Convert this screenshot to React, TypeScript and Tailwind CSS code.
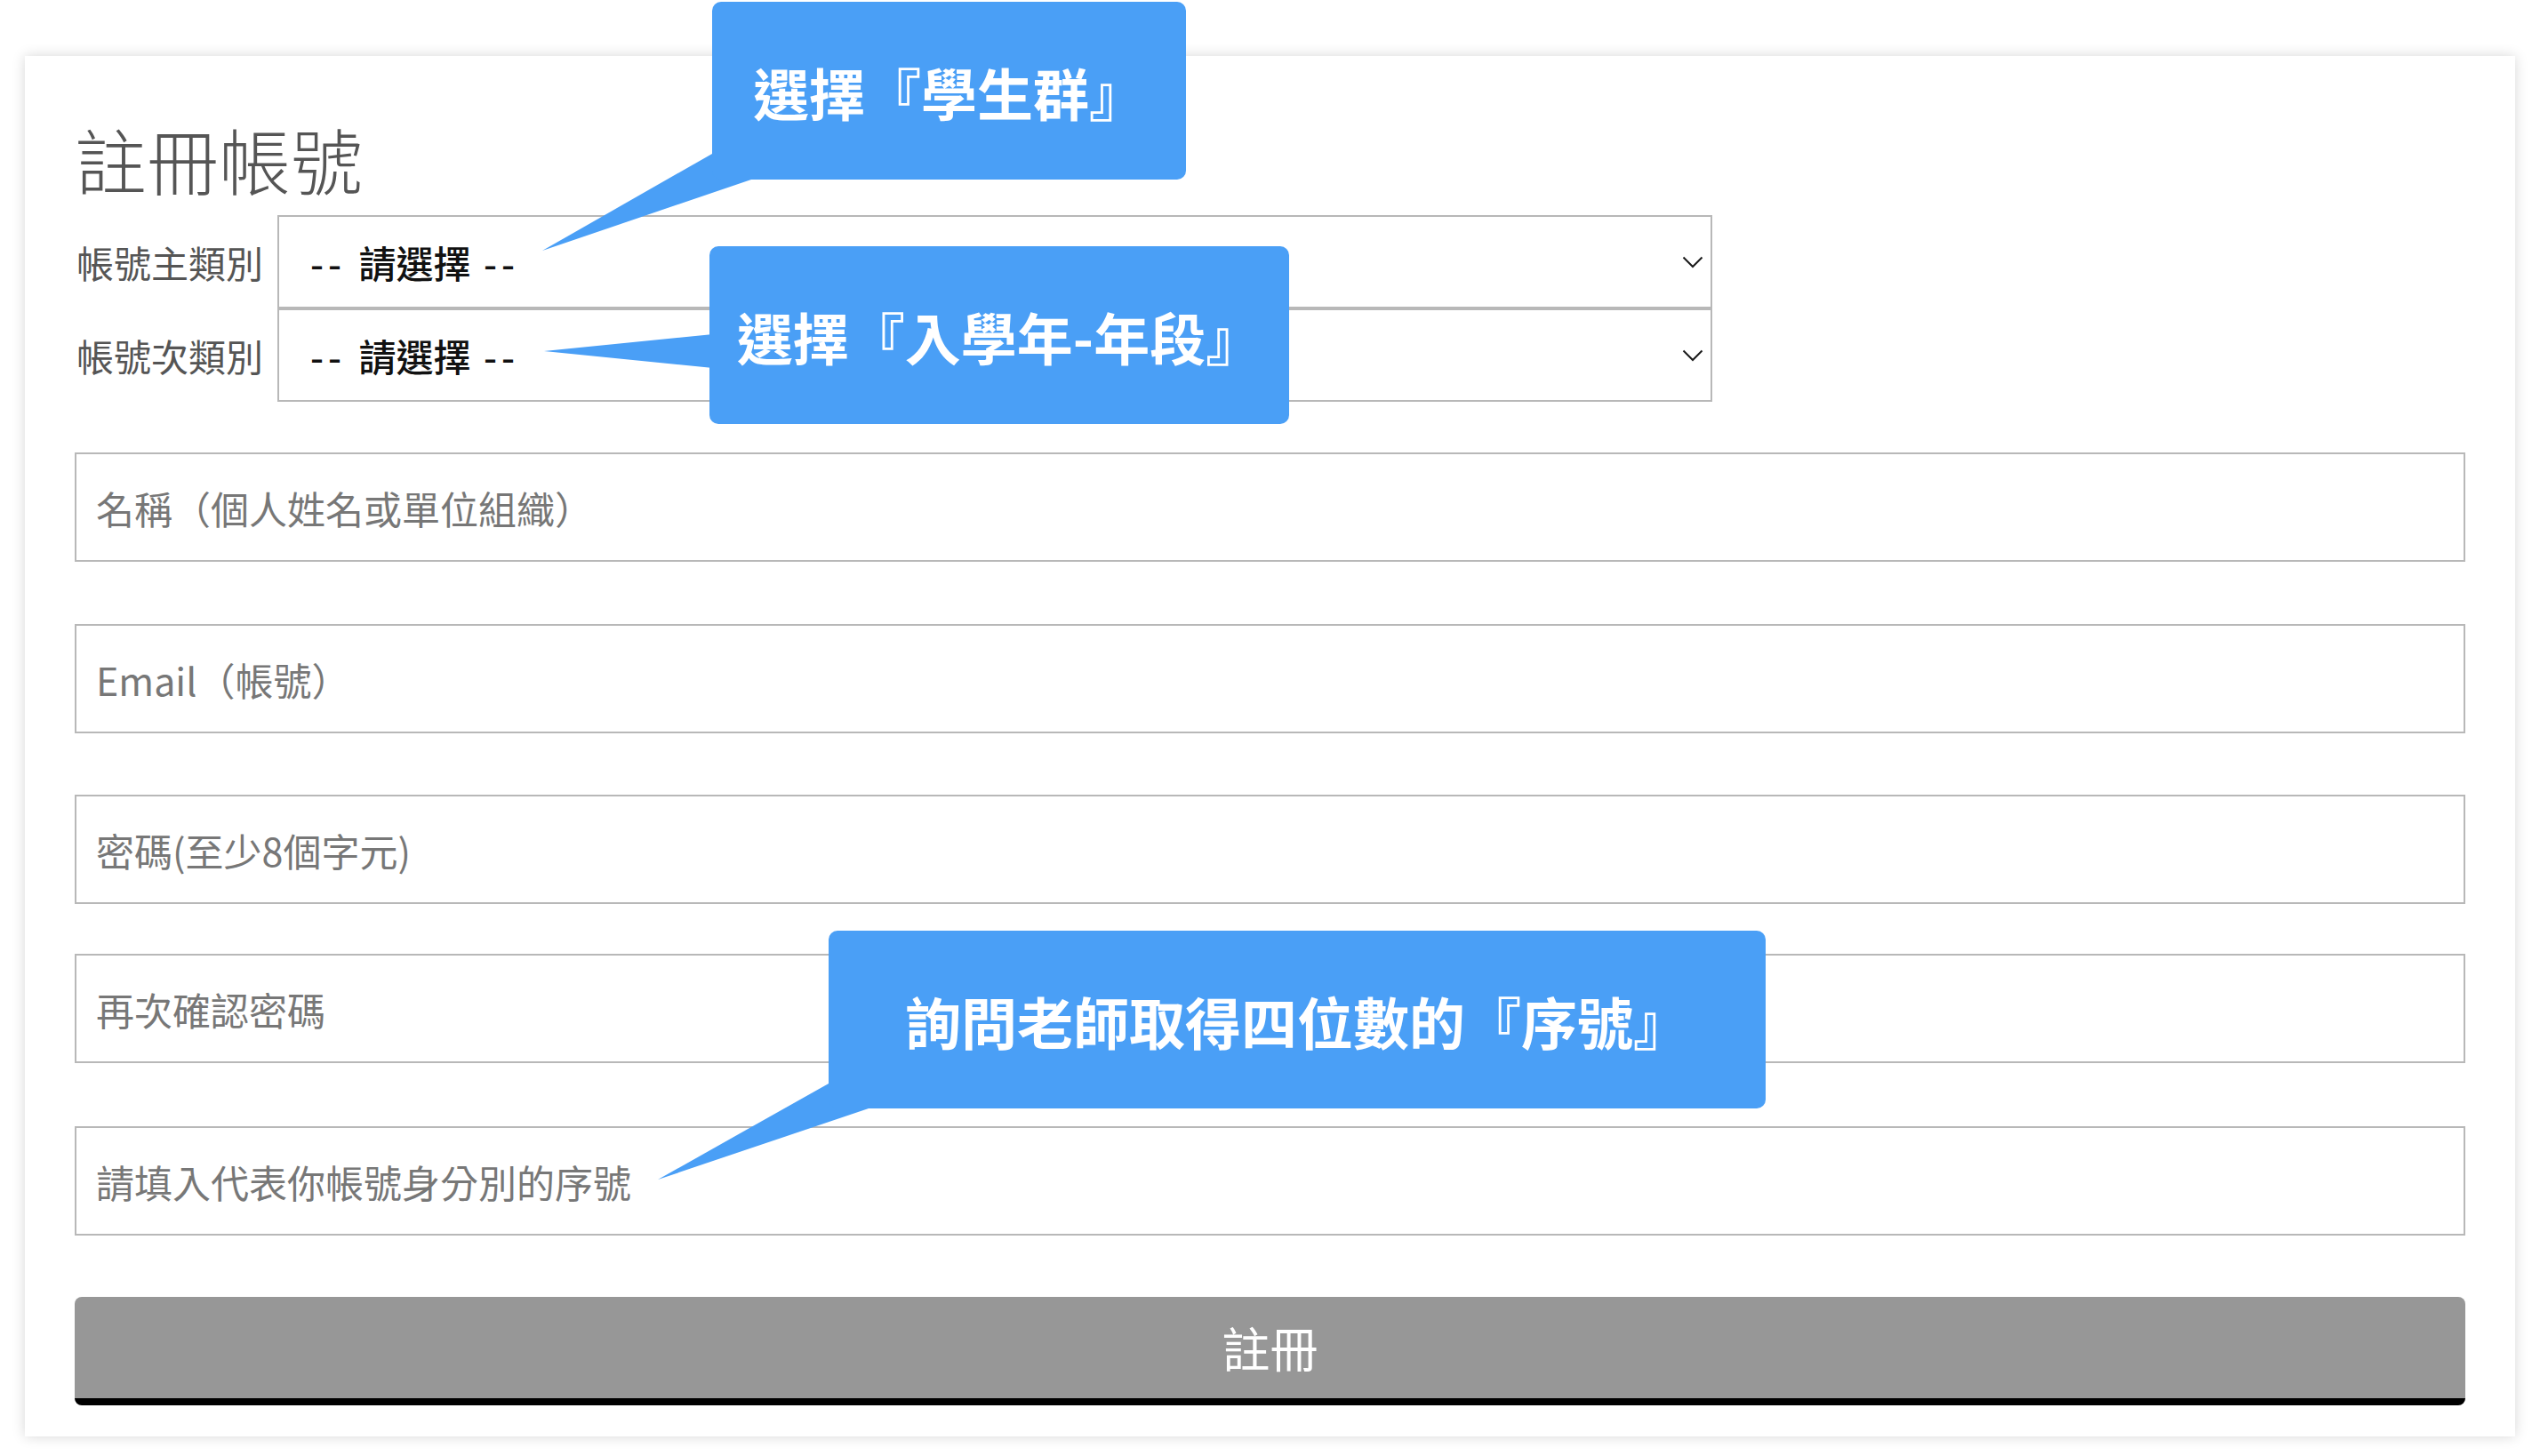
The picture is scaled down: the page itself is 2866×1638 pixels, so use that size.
import React from "react";

const FONT = '"Noto Sans CJK TC", "Noto Sans", sans-serif';

function Chevron() {
  return (
    <svg width="24" height="14" viewBox="0 0 24 14" fill="none">
      <polyline points="1.5,1.5 12,12 22.5,1.5" stroke="#1a1a1a" strokeWidth="2" />
    </svg>
  );
}

// fake select, same look as the native one in the screenshot
function SelectRow({ label }: { label: string }) {
  return (
    <div className="flex items-center">
      <div className="w-[226px] text-[42px] leading-none text-[#555]">{label}</div>
      <div className="w-[1614px] h-[105px] border-2 border-[#b8b8b8] bg-white flex items-center justify-between pl-[35px] pr-[8px]">
        <span className="text-[42px] leading-none font-medium text-[#111] whitespace-pre">
          <span className="tracking-[5px]">-- </span>請選擇<span className="tracking-[5px]"> --</span>
        </span>
        <Chevron />
      </div>
    </div>
  );
}

function Field({ placeholder, type = "text", className = "" }: { placeholder: string; type?: string; className?: string }) {
  return (
    <input
      type={type}
      placeholder={placeholder}
      className={
        "block w-full h-[123px] border-2 border-[#b8b8b8] bg-white px-[22px] text-[43px] text-[#333] placeholder:text-[#777] outline-none " +
        className
      }
    />
  );
}

function Callout({ text, className }: { text: string; className: string }) {
  return (
    <div
      className={
        "absolute h-[200px] rounded-[10px] bg-[#4a9ff6] flex items-center justify-center text-white font-bold text-[63px] leading-none whitespace-nowrap " +
        className
      }
    >
      {text}
    </div>
  );
}

export default function App() {
  return (
    <div className="relative w-[2866px] h-[1638px] overflow-hidden bg-white pt-[63px] pl-[28px]" style={{ fontFamily: FONT }}>
      {/* Card */}
      <div className="w-[2801px] h-[1553px] bg-white shadow-[0_0_14px_rgba(0,0,0,0.16)] pt-[74px] px-[56px]">
        <h1 className="h-[84px] text-[81px] leading-none font-light text-[#555]">註冊帳號</h1>

        <div className="mt-[21px] pl-[2px]">
          <SelectRow label="帳號主類別" />
          <SelectRow label="帳號次類別" />
        </div>

        <Field placeholder="名稱（個人姓名或單位組織）" className="mt-[57px]" />
        <Field placeholder="Email（帳號）" type="email" className="mt-[70px]" />
        <Field placeholder="密碼(至少8個字元)" type="password" className="mt-[69px]" />
        <Field placeholder="再次確認密碼" type="password" className="mt-[56px]" />
        <Field placeholder="請填入代表你帳號身分別的序號" className="mt-[71px]" />

        <button className="mt-[69px] w-full h-[122px] rounded-[8px] bg-[#979797] border-b-[8px] border-black text-white text-[54px] leading-none">
          註冊
        </button>
      </div>

      {/* Annotation tails */}
      <svg className="absolute left-0 top-0 pointer-events-none" width="2866" height="1638">
        <polygon points="801,173 610,282 845,202 845,173" fill="#4a9ff6" />
        <polygon points="812,375 612,395 812,415" fill="#4a9ff6" />
        <polygon points="932,1219 740,1327 977,1247 977,1219" fill="#4a9ff6" />
      </svg>

      {/* Annotations */}
      <Callout text="選擇『學生群』" className="left-[801px] top-[2px] w-[533px]" />
      <Callout text="選擇『入學年-年段』" className="left-[798px] top-[277px] w-[652px]" />
      <Callout text="詢問老師取得四位數的『序號』" className="left-[932px] top-[1047px] w-[1054px]" />
    </div>
  );
}
